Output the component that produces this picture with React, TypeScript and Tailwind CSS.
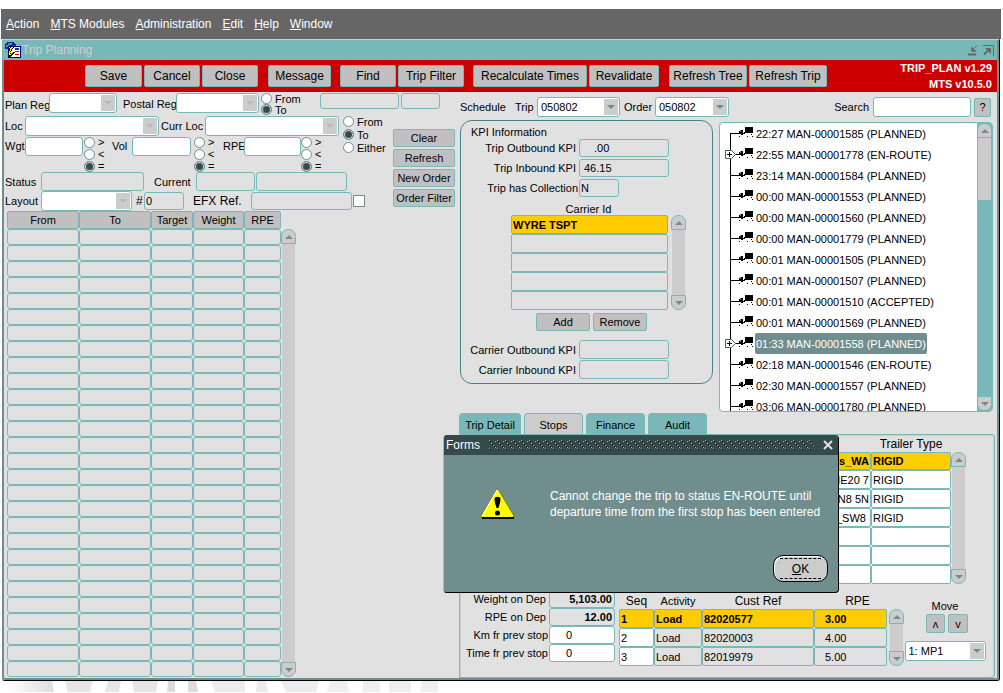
import React from 'react';
import clsx from 'clsx';

const menus = [
  { key: 'A', rest: 'ction' },
  { key: 'M', rest: 'TS Modules' },
  { key: 'A', rest: 'dministration' },
  { key: 'E', rest: 'dit' },
  { key: 'H', rest: 'elp' },
  { key: 'W', rest: 'indow' },
];

const trips = [
  { label: '22:27 MAN-00001585 (PLANNED)' },
  { label: '22:55 MAN-00001778 (EN-ROUTE)', expandable: true },
  { label: '23:14 MAN-00001584 (PLANNED)' },
  { label: '00:00 MAN-00001553 (PLANNED)' },
  { label: '00:00 MAN-00001560 (PLANNED)' },
  { label: '00:00 MAN-00001779 (PLANNED)' },
  { label: '00:01 MAN-00001505 (PLANNED)' },
  { label: '00:01 MAN-00001507 (PLANNED)' },
  { label: '00:01 MAN-00001510 (ACCEPTED)' },
  { label: '00:01 MAN-00001569 (PLANNED)' },
  { label: '01:33 MAN-00001558 (PLANNED)', expandable: true, selected: true },
  { label: '02:18 MAN-00001546 (EN-ROUTE)' },
  { label: '02:30 MAN-00001557 (PLANNED)' },
  { label: '03:06 MAN-00001780 (PLANNED)' },
];

const trailers = [
  ['s_WA', 'RIGID'],
  ['ME20 7', 'RIGID'],
  ['TN8 5N', 'RIGID'],
  ['_SW8 ', 'RIGID'],
  ['', ''],
  ['', ''],
  ['', ''],
];

const loads = [
  ['1', 'Load', '82020577', '3.00'],
  ['2', 'Load', '82020003', '4.00'],
  ['3', 'Load', '82019979', '5.00'],
];

const orderRows = Array.from({ length: 28 }, (_, i) => i);

interface FieldProps {
  label: string;
  className: string;
  value?: string;
}

const Field: React.FC<FieldProps> = ({ label, className, value = '' }) => (
  <input
    type="text"
    aria-label={label}
    defaultValue={value}
    className={clsx('shrink-0 rounded-[3px] border border-[#79b8b8] outline-none', className)}
  />
);

interface ComboProps {
  label: string;
  className: string;
  value?: string;
  muted?: boolean;
}

const Combo: React.FC<ComboProps> = ({ label, className, value = '', muted = false }) => (
  <span className={clsx('relative block h-5 shrink-0 rounded-[3px] border border-[#79b8b8] bg-white', className)}>
    <select aria-label={label} className="block h-full w-full appearance-none bg-transparent pl-[3px] outline-none">
      <option>{value}</option>
    </select>
    <span className="pointer-events-none absolute inset-y-px right-px flex w-[14px] items-center justify-center bg-[#cccccc]">
      <svg width="8" height="4" viewBox="0 0 8 4" className={muted ? 'text-[#b9b9b9]' : 'text-[#718e8e]'}>
        <path d="M0 0h8L4 4z" fill="currentColor" />
      </svg>
    </span>
  </span>
);

interface RadiosProps {
  name: string;
  options: string[];
  checked: string;
  rowClass: string;
}

const Radios: React.FC<RadiosProps> = ({ name, options, checked, rowClass }) => (
  <div role="radiogroup" aria-label={name} className="flex flex-col">
    {options.map((option) => (
      <label key={option} className={clsx('flex items-center gap-[3px] whitespace-nowrap', rowClass)}>
        <input
          type="radio"
          name={name}
          defaultChecked={option === checked}
          className="h-[11px] w-[11px] shrink-0 appearance-none rounded-full border border-[#718e8e] bg-white checked:bg-[#354a4b] checked:shadow-[inset_0_0_0_1px_#e1e1e1]"
        />
        {option}
      </label>
    ))}
  </div>
);

const ToolButton: React.FC<{ className: string; children: React.ReactNode }> = ({ className, children }) => (
  <button
    type="button"
    className={clsx('h-[22px] shrink-0 rounded-[2px] border border-[#79b8b8] bg-[#c0c0c0] text-xs whitespace-nowrap', className)}
  >
    {children}
  </button>
);

const SmallButton: React.FC<{ className: string; children: React.ReactNode }> = ({ className, children }) => (
  <button
    type="button"
    className={clsx('shrink-0 rounded-[2px] border border-[#79b8b8] bg-[#c0c0c0] leading-[14px] whitespace-nowrap', className)}
  >
    {children}
  </button>
);

const Scrollbar: React.FC<{ className?: string; thumb?: boolean }> = ({ className, thumb = false }) => (
  <div className={clsx('flex w-[15px] shrink-0 flex-col', thumb ? 'bg-[#79b8b8]' : '', className)}>
    <button
      type="button"
      aria-label="Scroll up"
      className="flex h-[15px] items-center justify-center rounded-t-[7px] border border-[#79b8b8] bg-[#cccccc]"
    >
      <svg width="8" height="4" viewBox="0 0 8 4">
        <path d="M0 4h8L4 0z" fill="#718e8e" />
      </svg>
    </button>
    <div className={clsx('mx-px', thumb ? 'h-[62px] bg-[#cccccc]' : 'flex-1 bg-[#cccccc]')} />
    {thumb && <div className="flex-1" />}
    <button
      type="button"
      aria-label="Scroll down"
      className="flex h-[15px] items-center justify-center rounded-b-[7px] border border-[#79b8b8] bg-[#cccccc]"
    >
      <svg width="8" height="4" viewBox="0 0 8 4">
        <path d="M0 0h8L4 4z" fill="#718e8e" />
      </svg>
    </button>
  </div>
);

const AppIcon: React.FC = () => (
  <svg width="17" height="17" viewBox="0 0 17 17" shapeRendering="crispEdges">
    <path d="M3 0h6l3 2v5H1V3z" fill="#1a2a8c" />
    <path d="M4 1h4v2H5v2H2V3h2z" fill="#3f9aa0" />
    <path d="M4 4h13v12H4z" fill="#000080" />
    <path d="M5 5h11v10H5z" fill="#fff" />
    <path d="M11 6h4v2h-4z" fill="#1c2f9a" />
    <path d="M11 9h4v1h-4zM11 12h4v1h-4z" fill="#cc0000" />
    <path d="M6 5h4L7 10h4l-6 6 1-5H4z" fill="#000" />
    <path d="M7 5h2L6 10h3l-3 4 1-3H5z" fill="#ffee00" />
  </svg>
);

const TreeBranch: React.FC<{ first: boolean; expandable?: boolean }> = ({ first, expandable }) => (
  <svg width="35" height="21" viewBox="-1 0 35 21" className="shrink-0" shapeRendering="crispEdges">
    <path d={first ? 'M9 10h1v11h-1z' : 'M9 0h1v21h-1z'} fill="#000" />
    <path d="M10 10h8v1h-8z" fill="#000" />
    {expandable && (
      <g shapeRendering="auto">
        <path d="M4.500 6.500h6l4 4-4 4h-6z" fill="#fff" stroke="#3d6464" />
        <path d="M6 10.500h5M8.500 8v5" stroke="#000" />
      </g>
    )}
    {/* lorry: cab, coupling, box and wheels */}
    <path d="M18 8h2V7h2v3h1V9h1v2h-2v1h-2v-1h-2z" fill="#000" />
    <path d="M19 7h1v2h-1z" fill="#777" />
    <path d="M24 4h8v6h-8z" fill="#000" />
    <path d="M18 13h1v1h-1zM26 13h1v1h-1zM31 13h1v1h-1zM30 11h1v1h-1z" fill="#000" />
  </svg>
);

const WarningIcon: React.FC = () => (
  <svg width="36" height="32" viewBox="0 0 36 32">
    <path d="M18 2 34 29l-1 2H3z" fill="#000" />
    <path d="M17 1 1 28l1 2h31l1-2L18 1z" fill="#ffff00" stroke="#808000" />
    <path d="M17 2 2 28" stroke="#fff" />
    <path d="M2 30h32" stroke="#000" strokeWidth="2" />
    <path d="M14.500 11c0-3 6-3 6 0 0 4-1.500 6-2 9h-2c-.5-3-2-5-2-9z" fill="#000" />
    <circle cx="17.500" cy="25" r="2.500" fill="#000" />
  </svg>
);

const Toolbar: React.FC = () => (
  <div className="flex h-8 items-center bg-[#cc0000] pr-[5px] pl-[81px]">
    <div className="flex gap-[2px]">
      <ToolButton className="w-[57px]">Save</ToolButton>
      <ToolButton className="w-[56px]">Cancel</ToolButton>
      <ToolButton className="w-[56px]">Close</ToolButton>
    </div>
    <ToolButton className="ml-[10px] w-[63px]">Message</ToolButton>
    <div className="ml-[9px] flex gap-[2px]">
      <ToolButton className="w-[56px]">Find</ToolButton>
      <ToolButton className="w-[66px]">Trip Filter</ToolButton>
    </div>
    <div className="ml-[9px] flex gap-[2px]">
      <ToolButton className="w-[114px]">Recalculate Times</ToolButton>
      <ToolButton className="w-[70px]">Revalidate</ToolButton>
    </div>
    <div className="ml-[10px] flex gap-[2px]">
      <ToolButton className="w-[78px]">Refresh Tree</ToolButton>
      <ToolButton className="w-[78px]">Refresh Trip</ToolButton>
    </div>
    <div className="ml-auto text-right leading-4 font-bold whitespace-nowrap text-white">
      <div>TRIP_PLAN v1.29</div>
      <div>MTS v10.5.0</div>
    </div>
  </div>
);

const OrderFilters: React.FC = () => (
  <>
    <div className="flex h-[23px] items-start pt-px pl-px">
      <span className="w-[44px] pt-[6px] whitespace-nowrap">Plan Reg</span>
      <Combo label="Plan Reg" className="w-[68px]" muted />
      <span className="ml-[6px] w-[53px] pt-[5px] whitespace-nowrap">Postal Reg</span>
      <Combo label="Postal Reg" className="w-[83px]" muted />
      <div className="w-[61px] pl-[2px]">
        <Radios name="Postal direction" options={['From', 'To']} checked="To" rowClass="h-[11px]" />
      </div>
      <Field label="Region from" className="mr-[2px] h-4 w-[79px]" />
      <Field label="Region to" className="h-4 w-[39px]" />
    </div>

    <div className="flex">
      <div className="w-[389px] pl-px">
        <div className="flex">
          <div className="w-[338px]">
            <div className="flex h-[21px] items-center pt-px">
              <span className="w-5">Loc</span>
              <Combo label="Loc" className="w-[134px]" muted />
              <span className="ml-[2px] w-[44px] whitespace-nowrap">Curr Loc</span>
              <Combo label="Curr Loc" className="w-[134px]" muted />
            </div>
            <div className="flex h-9 items-start">
              <span className="w-5 pt-1">Wgt</span>
              <Field label="Wgt" className="mt-px h-[19px] w-[58px] bg-white" />
              <div className="w-[29px] pl-px">
                <Radios name="Weight comparison" options={['>', '<', '=']} checked="=" rowClass="h-3" />
              </div>
              <span className="w-5 pt-1">Vol</span>
              <Field label="Vol" className="mt-px h-[19px] w-[59px] bg-white" />
              <div className="w-[32px] pl-[3px]">
                <Radios name="Volume comparison" options={['>', '<', '=']} checked="=" rowClass="h-3" />
              </div>
              <span className="w-[21px] pt-1">RPE</span>
              <Field label="RPE" className="mt-px h-[19px] w-[57px] bg-white" />
              <Radios name="RPE comparison" options={['>', '<', '=']} checked="=" rowClass="h-3" />
            </div>
          </div>
          <Radios name="Location direction" options={['From', 'To', 'Either']} checked="To" rowClass="h-[13px]" />
        </div>
        <div className="flex h-[19px] items-center">
          <span className="w-9">Status</span>
          <Field label="Status" className="h-[19px] w-[103px]" />
          <span className="ml-[10px] w-[42px]">Current</span>
          <Field label="Current" className="mr-px h-[19px] w-[59px]" />
          <Field label="Current description" className="h-[19px] w-[91px]" />
        </div>
        <div className="flex h-5 items-center">
          <span className="w-9">Layout</span>
          <Combo label="Layout" className="w-[91px]" muted />
          <span className="ml-1 w-2 text-xs">#</span>
          <Field label="Number" value="0" className="h-[18px] w-[40px] pl-px" />
          <span className="ml-[9px] w-[58px] text-xs">EFX Ref.</span>
          <Field label="EFX Ref." className="h-[18px] w-[101px]" />
          <input
            type="checkbox"
            aria-label="EFX Ref. only"
            className="ml-px h-3 w-3 appearance-none border border-[#718e8e] bg-white"
          />
        </div>
      </div>
      <div className="flex flex-col gap-[2px] pt-[14px]">
        <SmallButton className="h-[18px] w-[62px]">Clear</SmallButton>
        <SmallButton className="h-[18px] w-[62px]">Refresh</SmallButton>
        <SmallButton className="h-[18px] w-[62px]">New Order</SmallButton>
        <SmallButton className="h-[18px] w-[62px]">Order Filter</SmallButton>
      </div>
    </div>
  </>
);

const OrderTable: React.FC = () => (
  <div className="flex items-stretch pl-[3px]">
    <table className="table-fixed border-separate border-spacing-0">
      <colgroup>
        <col className="w-[72px]" />
        <col className="w-[72px]" />
        <col className="w-[42px]" />
        <col className="w-[51px]" />
        <col className="w-[37px]" />
      </colgroup>
      <thead>
        <tr>
          {['From', 'To', 'Target', 'Weight', 'RPE'].map((name) => (
            <th
              key={name}
              className="h-[18px] rounded-[2px] border border-[#79b8b8] bg-[#c0c0c0] p-0 leading-4 font-normal"
            >
              {name}
            </th>
          ))}
        </tr>
      </thead>
      <tbody>
        {orderRows.map((row) => (
          <tr key={row}>
            {[0, 1, 2, 3, 4].map((col) => (
              <td key={col} className="h-4 rounded-[3px] border border-[#79b8b8] p-0" />
            ))}
          </tr>
        ))}
      </tbody>
    </table>
    <Scrollbar className="mt-[18px]" />
  </div>
);

const KpiPanel: React.FC = () => (
  <section className="h-[264px] w-[253px] shrink-0 rounded-xl border border-[#458585] pt-[5px]">
    <h2 className="h-[13px] pl-[10px]">KPI Information</h2>
    <div className="flex flex-col gap-[2px]">
      <label className="flex items-center">
        <span className="w-[118px] pr-[3px] text-right">Trip Outbound KPI</span>
        <Field label="Trip Outbound KPI" value=".00" className="h-[18px] w-[90px] pl-[14px]" />
      </label>
      <label className="flex items-center">
        <span className="w-[118px] pr-[3px] text-right">Trip Inbound KPI</span>
        <Field label="Trip Inbound KPI" value="46.15" className="h-[18px] w-[90px] pl-1" />
      </label>
      <label className="flex items-center">
        <span className="w-[118px] pr-px text-right whitespace-nowrap">Trip has Collection</span>
        <Field label="Trip has Collection" value="N" className="h-[18px] w-[40px] pl-px" />
      </label>
    </div>
    <div className="pt-[6px] pl-1 text-center">Carrier Id</div>
    <div className="flex gap-[3px] pl-[50px]">
      <table aria-label="Carrier Id" className="w-[157px] border-separate border-spacing-0">
        <tbody>
          {['WYRE TSPT', '', '', '', ''].map((carrier, idx) => (
            <tr key={idx}>
              <td
                className={clsx(
                  'h-[19px] rounded-[2px] border border-[#79b8b8] p-0 pl-px leading-4',
                  idx === 0 && 'bg-[#ffcc00] font-bold',
                )}
              >
                {carrier}
              </td>
            </tr>
          ))}
        </tbody>
      </table>
      <Scrollbar />
    </div>
    <div className="flex gap-[3px] pt-[3px] pl-[75px]">
      <SmallButton className="h-[18px] w-[54px]">Add</SmallButton>
      <SmallButton className="h-[18px] w-[54px]">Remove</SmallButton>
    </div>
    <div className="flex flex-col gap-px pt-[9px]">
      <label className="flex items-center">
        <span className="w-[118px] pr-[3px] text-right">Carrier Outbound KPI</span>
        <Field label="Carrier Outbound KPI" className="h-[19px] w-[90px]" />
      </label>
      <label className="flex items-center">
        <span className="w-[118px] pr-[3px] text-right">Carrier Inbound KPI</span>
        <Field label="Carrier Inbound KPI" className="h-[19px] w-[90px]" />
      </label>
    </div>
  </section>
);

const TripTree: React.FC = () => (
  <section className="mt-[2px] flex h-[290px] flex-1 overflow-hidden rounded-[4px] border border-[#79b8b8] bg-white">
    <ul role="tree" className="flex-1 overflow-hidden">
      {trips.map((trip, idx) => (
        <li key={trip.label} role="treeitem" className="flex h-[21px] items-center">
          <TreeBranch first={idx === 0} expandable={trip.expandable} />
          <span
            className={clsx(
              'h-[21px] pt-px pr-px pl-px leading-5 whitespace-nowrap',
              trip.selected && 'rounded-[2px] bg-[#718e8e] text-white',
            )}
          >
            {trip.label}
          </span>
        </li>
      ))}
    </ul>
    <Scrollbar thumb />
  </section>
);

const Tabs: React.FC = () => (
  <div role="tablist" className="flex gap-[3px]">
    {['Trip Detail', 'Stops', 'Finance', 'Audit'].map((tab, idx) => (
      <button
        key={tab}
        type="button"
        role="tab"
        aria-selected={tab === 'Stops'}
        className={clsx(
          'h-[21px] rounded-t-[4px] border border-b-0 border-[#79b8b8] pt-px whitespace-nowrap',
          idx === 0 ? 'w-[62px]' : 'w-[59px]',
          tab === 'Stops' ? 'bg-[#cccccc]' : 'bg-[#79b8b8]',
        )}
      >
        {tab}
      </button>
    ))}
  </div>
);

const StopsPanel: React.FC = () => (
  <section className="mr-[2px] flex-1 rounded-r-[3px] border border-[#79b8b8] pb-[11px] shadow-[inset_-1px_0_0_#cccccc,inset_1px_0_0_#cccccc,inset_0_1px_0_#cccccc]">
    <div className="flex justify-end pr-[28px]">
      <table className="border-separate border-spacing-0">
        <thead>
          <tr>
            <th className="h-[17px] w-[120px] p-0" />
            <th className="h-[17px] w-[80px] p-0 text-xs leading-4 font-normal">Trailer Type</th>
          </tr>
        </thead>
        <tbody>
          {trailers.map(([place, type], idx) => (
            <tr key={idx} className={idx === 0 ? 'h-[18px] bg-[#ffcc00] font-bold' : 'h-[19px] bg-white'}>
              <td className="rounded-[2px] border border-[#79b8b8] p-0 pr-px text-right leading-4 whitespace-pre">
                {place}
              </td>
              <td className="rounded-[2px] border border-[#79b8b8] p-0 pl-px leading-4">{type}</td>
            </tr>
          ))}
        </tbody>
      </table>
      <Scrollbar className="mt-[17px]" />
    </div>

    <div className="flex items-start pt-[6px]">
      <div className="flex w-[156px] flex-col">
        <label className="flex items-center">
          <span className="w-[89px] pr-[3px] text-right">Weight on Dep</span>
          <Field label="Weight on Dep" value="5,103.00" className="h-[18px] w-[66px] pr-[2px] text-right font-bold" />
        </label>
        <label className="flex items-center">
          <span className="w-[89px] pr-[3px] text-right">RPE on Dep</span>
          <Field label="RPE on Dep" value="12.00" className="h-[18px] w-[66px] pr-[2px] text-right font-bold" />
        </label>
        <label className="flex items-center">
          <span className="w-[89px] pr-px text-right">Km fr prev stop</span>
          <Field label="Km fr prev stop" value="0" className="h-[18px] w-[66px] bg-white pl-4" />
        </label>
        <label className="flex items-center">
          <span className="w-[89px] pr-px text-right whitespace-nowrap">Time fr prev stop</span>
          <Field label="Time fr prev stop" value="0" className="h-[18px] w-[66px] bg-white pl-4" />
        </label>
      </div>

      <div className="flex pt-[4px] pl-[3px]">
        <table className="table-fixed border-separate border-spacing-0">
          <colgroup>
            <col className="w-[35px]" />
            <col className="w-[48px]" />
            <col className="w-[112px]" />
            <col className="w-[73px]" />
          </colgroup>
          <thead>
            <tr>
              {['Seq', 'Activity', 'Cust Ref', 'RPE'].map((name) => (
                <th
                  key={name}
                  className={clsx(
                    'h-[15px] p-0 leading-[15px] font-normal',
                    name !== 'Activity' && 'text-xs',
                    name === 'RPE' && 'pl-[14px]',
                  )}
                >
                  {name}
                </th>
              ))}
            </tr>
          </thead>
          <tbody>
            {loads.map((cells, row) => (
              <tr key={cells[0]} className={clsx(row === 0 && 'bg-[#ffcc00] font-bold')}>
                {cells.map((cell, col) => (
                  <td
                    key={col}
                    className={clsx(
                      'h-[19px] rounded-[2px] border border-[#79b8b8] p-0 leading-4',
                      col === 3 ? 'pl-[10px]' : 'pl-px',
                      col === 0 && row > 0 && 'bg-white',
                    )}
                  >
                    {cell}
                  </td>
                ))}
              </tr>
            ))}
          </tbody>
        </table>
        <Scrollbar className="mt-[15px] ml-[2px]" />
      </div>

      <div className="flex w-[82px] flex-col items-center pt-[10px]">
        <span>Move</span>
        <div className="flex gap-[3px] pt-[2px] pl-1">
          <SmallButton className="h-[19px] w-[19px]">ʌ</SmallButton>
          <SmallButton className="h-[19px] w-[20px]">v</SmallButton>
        </div>
        <Combo label="Move target" value="1: MP1" className="mt-2 w-[81px]" />
      </div>
    </div>
  </section>
);

const MessageDialog: React.FC = () => (
  <div
    role="alertdialog"
    aria-label="Forms"
    className="absolute top-[395px] left-[441px] w-[396px] overflow-hidden rounded-[4px] border border-t-0 border-r-black border-b-black border-l-[#a8b8b8] bg-[#718e8e] text-xs text-white"
  >
    <div className="flex h-5 items-center bg-[#354a4b] pr-[5px] pl-[2px]">
      <span>Forms</span>
      <svg height="12" className="mx-[9px] flex-1" shapeRendering="crispEdges">
        <defs>
          <pattern id="grip" width="8" height="12" patternUnits="userSpaceOnUse">
            <path d="M0 1h1v1h-1zM6 2h1v1h-1zM2 4h1v1h-1zM4 6h1v1h-1zM0 9h1v1h-1zM6 8h1v1h-1z" fill="#79b8b8" />
            <path d="M1 2h1v1h-1zM3 5h1v1h-1zM5 7h1v1h-1zM1 10h1v1h-1z" fill="#000" />
          </pattern>
        </defs>
        <rect width="100%" height="12" fill="url(#grip)" />
      </svg>
      <button type="button" aria-label="Close dialog">
        <svg width="10" height="10" viewBox="0 0 10 10">
          <path d="m1 1 8 8M9 1 1 9" stroke="#e1e1e1" strokeWidth="2" />
        </svg>
      </button>
    </div>
    <div className="flex items-start pt-[33px] pl-9">
      <WarningIcon />
      <p className="pl-[34px] leading-4 whitespace-nowrap">
        Cannot change the trip to status EN-ROUTE until
        <br />
        departure time from the first stop has been entered
      </p>
    </div>
    <div className="flex justify-end pt-[35px] pr-[10px] pb-[10px]">
      <button
        type="button"
        className="h-[27px] w-[55px] rounded-[10px] border border-black bg-[#cccccc] p-[2px] text-black shadow-[inset_1px_1px_0_#fff]"
      >
        <span className="mx-1 flex h-full items-center justify-center border-y border-dashed border-black">
          <span>
            <u>O</u>K
          </span>
        </span>
      </button>
    </div>
  </div>
);

const App: React.FC = () => {
  return (
    <div className="min-h-screen bg-white pt-[9px] font-['Liberation_Sans',Arial,sans-serif] text-[11px] leading-3 text-black">
      <nav className="mr-[2px] ml-px flex h-[30px] items-center gap-[11px] bg-[#666666] pl-[5px] text-xs text-white">
        {menus.map((menu) => (
          <button key={menu.key + menu.rest} type="button">
            <u>{menu.key}</u>
            {menu.rest}
          </button>
        ))}
      </nav>

      <div className="relative mr-[3px] ml-[2px] rounded-b-[3px] border-t border-r border-b border-t-[#cccccc] border-r-black border-b-black">
        <div className="rounded-b-[3px] border-x-2 border-b-2 border-[#718e8e] bg-[#e1e1e1]">
          <header className="-ml-[2px] flex h-5 items-center bg-[#79b8b8] pr-[3px] pl-[2px] text-xs text-[#cfcfcf]">
            <AppIcon />
            <h1 className="pl-px">Trip Planning</h1>
            <div className="ml-auto flex gap-[5px]">
              <button type="button" aria-label="Minimise">
                <svg width="11" height="11" viewBox="0 0 11 11">
                  <path d="M1 9.500h8" stroke="#666" strokeWidth="2" />
                  <path d="M10 .5 5.500 5M5 2v4h4" fill="none" stroke="#666" strokeWidth="1" />
                  <path d="M4.500 2v4.500H9z" fill="#666" />
                </svg>
              </button>
              <button type="button" aria-label="Restore">
                <svg width="11" height="11" viewBox="0 0 11 11">
                  <path d="M0 .5h10.500V11" fill="none" stroke="#666" />
                  <path d="m1 9.500 4-4" stroke="#666" strokeWidth="2" />
                  <path d="M2 3h6v6z" fill="#666" />
                </svg>
              </button>
            </div>
          </header>

          <Toolbar />

          <main className="flex">
            <section className="w-[455px] shrink-0 pb-px">
              <OrderFilters />
              <OrderTable />
            </section>

            <section className="flex min-w-0 flex-1 flex-col pt-[5px]">
              <div className="flex h-5 items-center pr-[6px] pl-px">
                <span className="w-[55px]">Schedule</span>
                <span className="w-[22px]">Trip</span>
                <Combo label="Trip" value="050802" className="w-[83px]" />
                <span className="ml-1 w-[31px]">Order</span>
                <Combo label="Order" value="050802" className="w-[74px]" />
                <label htmlFor="search" className="ml-auto pr-1">
                  Search
                </label>
                <input
                  id="search"
                  type="text"
                  className="mr-[3px] h-5 w-[98px] rounded-[3px] border border-[#79b8b8] bg-white px-1 outline-none"
                />
                <SmallButton className="h-[19px] w-[17px]">?</SmallButton>
              </div>
              <div className="flex items-start gap-[6px] pt-[3px] pr-1 pl-px">
                <KpiPanel />
                <TripTree />
              </div>
              <div className="pt-px">
                <Tabs />
              </div>
              <StopsPanel />
            </section>
          </main>
        </div>
        <MessageDialog />
      </div>

      {/* tail of the desktop backdrop lettering */}
      <svg width="440" height="11" viewBox="0 0 440 11" className="block">
        <defs>
          <linearGradient id="fade" x1="0" x2="1">
            <stop offset="0" stopColor="#ffffff" />
            <stop offset="1" stopColor="#dedede" />
          </linearGradient>
        </defs>
        <path d="M6 0h46l2 11H6z" fill="url(#fade)" />
        <path d="M65 0h28l-3 11H68zM108 0h13l-2 11h-14zM132 0h26l-2 11h-22z" fill="#e6e6e6" />
        <path d="M168 0h7v11h-8zM188 0h8l2 11h-10z" fill="#dcdcdc" />
        <path d="M211 0h34v11h-30zM257 0h9l2 11h-12zM281 0h38l-3 11h-30z" fill="#ececec" />
        <path d="M330 0h17l2 11h-22zM363 0h17v11h-17zM389 0h22v11h-22zM422 0h16v11h-18z" fill="#efefef" />
      </svg>
    </div>
  );
};

export default App;
